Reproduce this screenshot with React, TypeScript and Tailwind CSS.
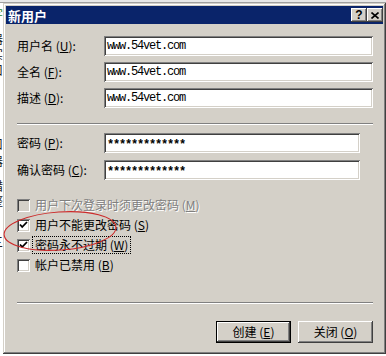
import React from "react";

const cjk = { fontFamily: '"Noto Sans CJK SC", "Noto Sans", sans-serif' };
const mono = { fontFamily: '"Liberation Mono", "DejaVu Sans Mono", monospace' };

const sunken =
  "shadow-[inset_1px_1px_0_#808080,inset_-1px_-1px_0_#ffffff,inset_2px_2px_0_#404040,inset_-2px_-2px_0_#d4d0c8]";
const raised =
  "shadow-[inset_-1px_-1px_0_#404040,inset_1px_1px_0_#ffffff,inset_-2px_-2px_0_#808080,inset_2px_2px_0_#d4d0c8]";

function Label({ text, k }: { text: string; k: string }) {
  return (
    <div className="w-[87px] shrink-0 text-[12px] leading-none text-black" style={cjk}>
      {text} (<u>{k}</u>):
    </div>
  );
}

function Field({ value, width, pw }: { value: string; width?: string; pw?: boolean }) {
  return (
    <div className={`h-[20px] bg-white ${sunken} flex items-center pl-[3px] ${width ?? "flex-1"}`}>
      {pw ? (
        <span className="text-[12px] font-bold leading-none tracking-[-1.2px] text-black relative top-[2px]" style={mono}>
          {value}
        </span>
      ) : (
        <span className="text-[12px] leading-none tracking-[-1.2px] text-black" style={mono}>
          {value}
        </span>
      )}
    </div>
  );
}

function Sep() {
  return <div className="h-[2px] border-t border-t-[#808080] border-b border-b-white" />;
}

function Check({ checked, disabled }: { checked?: boolean; disabled?: boolean }) {
  return (
    <div className={`w-[13px] h-[13px] shrink-0 ${disabled ? "bg-[#d4d0c8]" : "bg-white"} ${sunken} relative`}>
      {checked && (
        <svg width="13" height="13" viewBox="0 0 13 13" className="absolute left-0 top-0">
          <path d="M3 5.5 L5.2 8 L10 3" stroke="#000" strokeWidth="1.8" fill="none" />
        </svg>
      )}
    </div>
  );
}

function CheckRow({
  text,
  k,
  checked,
  disabled,
  focus,
}: {
  text: string;
  k: string;
  checked?: boolean;
  disabled?: boolean;
  focus?: boolean;
}) {
  return (
    <div className="h-[20px] flex items-center gap-[5px]">
      <Check checked={checked} disabled={disabled} />
      <div
        className={`text-[12px] leading-none ${
          disabled ? "text-[#808080] [text-shadow:1px_1px_0_#ffffff]" : "text-black"
        } ${focus ? "outline outline-1 outline-dotted outline-black outline-offset-[2px]" : ""}`}
        style={cjk}
      >
        {text} (<u>{k}</u>)
      </div>
    </div>
  );
}

function Btn({ text, k, def }: { text: string; k: string; def?: boolean }) {
  return (
    <div
      className={`w-[75px] h-[22px] bg-[#d4d0c8] flex items-center justify-center text-[12px] leading-none text-black ${
        def
          ? "border border-black shadow-[inset_-1px_-1px_0_#404040,inset_1px_1px_0_#ffffff,inset_-2px_-2px_0_#808080]"
          : raised
      }`}
      style={cjk}
    >
      {text} (<u>{k}</u>)
    </div>
  );
}

export default function App() {
  const bgChars: [number, string][] = [
    [33, "器"],
    [48, "实"],
    [64, "口"],
    [138, "口"],
    [155, "器"],
    [180, "措"],
    [195, "整"],
    [236, "三"],
  ];
  return (
    <div className="w-[386px] h-[356px] bg-white relative overflow-hidden">
      {/* background window fragment */}
      <div className="absolute left-0 top-0 w-full h-[3px] bg-[#e8e8e8] border-b border-b-[#a0a0a0]" />
      <div className="absolute left-[-9px] top-[8px] text-[12px] leading-none text-[#2a8a2a]" style={cjk}>
        字
      </div>
      {bgChars.map(([t, c]) => (
        <div key={t} className="absolute left-[-9px] text-[12px] leading-none text-[#222]" style={{ ...cjk, top: t }}>
          {c}
        </div>
      ))}

      {/* dialog */}
      <div
        className="absolute left-[3px] top-[3px] w-[383px] h-[351px] bg-[#d4d0c8] p-[3px] flex flex-col shadow-[inset_-1px_-1px_0_#404040,inset_1px_1px_0_#d4d0c8,inset_-2px_-2px_0_#808080,inset_2px_2px_0_#ffffff]"
      >
        <div className="h-[18px] bg-[#0a246a] flex items-center justify-between pl-[2px] pr-[0px]">
          <div className="text-white font-bold text-[13px] leading-none tracking-[0px]" style={cjk}>
            新用户
          </div>
          <div className="flex items-center">
            <div className={`w-[16px] h-[14px] bg-[#d4d0c8] ${raised} flex items-center justify-center`}>
              <span className="text-[12px] font-bold leading-none text-black" style={{ fontFamily: '"Liberation Sans", sans-serif' }}>
                ?
              </span>
            </div>
            <div className={`w-[16px] h-[14px] bg-[#d4d0c8] ${raised} flex items-center justify-center`}>
              <svg width="8" height="7" viewBox="0 0 8 7">
                <path d="M0.5 0.5 L7.5 6.5 M7.5 0.5 L0.5 6.5" stroke="#000" strokeWidth="1.6" />
              </svg>
            </div>
          </div>
        </div>

        <div className="flex-1 flex flex-col pl-[11px] pr-[10px] pt-[12px]">
          <div className="flex flex-col gap-[6px]">
            <div className="flex items-center">
              <Label text="用户名" k="U" />
              <Field value="www.54vet.com" />
            </div>
            <div className="flex items-center">
              <Label text="全名" k="F" />
              <Field value="www.54vet.com" />
            </div>
            <div className="flex items-center">
              <Label text="描述" k="D" />
              <Field value="www.54vet.com" />
            </div>
          </div>

          <div className="mt-[15px]">
            <Sep />
          </div>

          <div className="mt-[8px] flex flex-col gap-[7px]">
            <div className="flex items-center">
              <Label text="密码" k="P" />
              <Field value="*************" width="w-[256px]" pw />
            </div>
            <div className="flex items-center">
              <Label text="确认密码" k="C" />
              <Field value="*************" width="w-[256px]" pw />
            </div>
          </div>

          <div className="mt-[15px] flex flex-col">
            <CheckRow text="用户下次登录时须更改密码" k="M" disabled />
            <CheckRow text="用户不能更改密码" k="S" checked />
            <CheckRow text="密码永不过期" k="W" checked focus />
            <CheckRow text="帐户已禁用" k="B" />
          </div>

          <div className="mt-[27px]">
            <Sep />
          </div>

          <div className="mt-[17px] flex justify-end gap-[7px]">
            <Btn text="创建" k="E" def />
            <Btn text="关闭" k="O" />
          </div>
        </div>
      </div>

      {/* red hand-drawn ellipse annotation */}
      <svg className="absolute left-0 top-0 pointer-events-none" width="386" height="356">
        <ellipse
          cx="60"
          cy="231"
          rx="56"
          ry="19"
          transform="rotate(-4 60 231)"
          fill="none"
          stroke="#cc2a2a"
          strokeWidth="1.1"
        />
      </svg>
    </div>
  );
}
